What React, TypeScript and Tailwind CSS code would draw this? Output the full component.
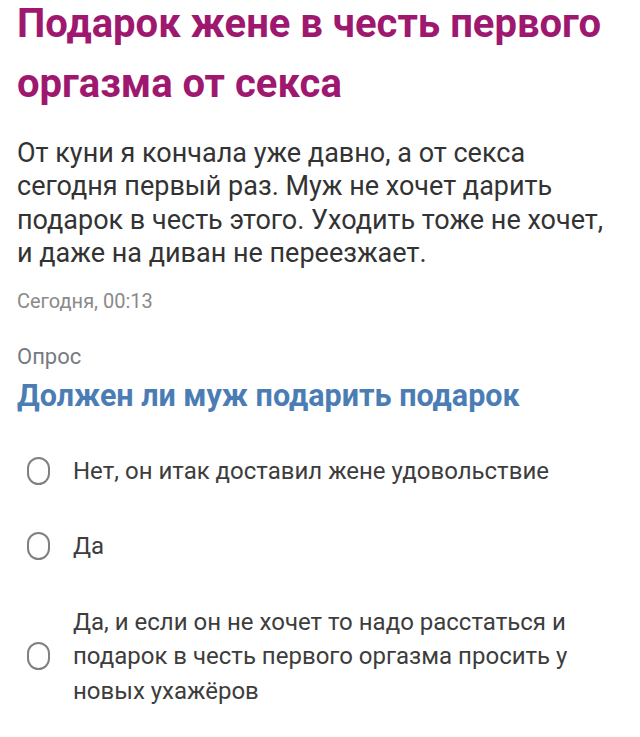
import React from 'react';

const options = [
  ['Нет, он итак доставил жене удовольствие'],
  ['Да'],
  [
    'Да, и если он не хочет то надо расстаться и',
    'подарок в честь первого оргазма просить у',
    'новых ухажёров',
  ],
];

function Radio() {
  return (
    <span className="shrink-0 w-[23px] h-[28px] rounded-full border-[2.5px] border-[#7f8082]" />
  );
}

export default function App() {
  return (
    <div className="min-h-screen bg-white px-[17px] font-['Roboto',sans-serif] overflow-hidden">
      {/* заголовок поста */}
      <h1 className="flex flex-col gap-[12px] text-[40px] leading-[48px] font-bold text-[#9e186f] whitespace-nowrap">
        <span>Подарок жене в честь первого</span>
        <span>оргазма от секса</span>
      </h1>

      <p className="mt-[29px] text-[27px] leading-[33.4px] text-[#333333] whitespace-nowrap">
        От куни я кончала уже давно, а от секса
        <br />
        сегодня первый раз. Муж не хочет дарить
        <br />
        подарок в честь этого. Уходить тоже не хочет,
        <br />
        и даже на диван не переезжает.
      </p>

      <div className="mt-[18px] text-[20px] leading-[24px] text-[#8a8a8a]">Сегодня, 00:13</div>

      {/* опрос */}
      <div className="mt-[30px] text-[22px] leading-[28px] text-[#757b82]">Опрос</div>
      <h2 className="mt-[7px] text-[30.5px] leading-[36px] font-bold text-[#4b7db5] whitespace-nowrap">
        Должен ли муж подарить подарок
      </h2>

      <div className="mt-[40px] flex flex-col gap-[41px] pl-[10px]">
        {options.map((lines, i) => (
          <div key={i} className="flex items-center gap-[23px]">
            <Radio />
            <div className="text-[24px] leading-[34.5px] text-[#3d3d3d] whitespace-nowrap">
              {lines.map((l, j) => (
                <div key={j}>{l}</div>
              ))}
            </div>
          </div>
        ))}
      </div>
    </div>
  );
}
